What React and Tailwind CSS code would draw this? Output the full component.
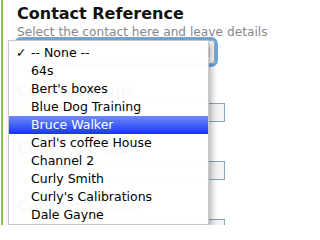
import { useState } from "react";

const contacts = [
  "-- None --",
  "64s",
  "Bert's boxes",
  "Blue Dog Training",
  "Bruce Walker",
  "Carl's coffee House",
  "Channel 2",
  "Curly Smith",
  "Curly's Calibrations",
  "Dale Gayne",
];

const fields = ["Contact Name", "Contact E-mail", "Contact Phone"];

const font = { fontFamily: '"DejaVu Sans", Verdana, sans-serif' };

const App = () => {
  const [selected] = useState(0);
  const [hovered] = useState(4);

  return (
    <div className="relative h-[225px] w-[273px] overflow-hidden bg-white pl-px" style={font}>
      <div className="h-full border-l-2 border-[#8cc63f] pl-[14px] pt-[4px]">
        <h2 className="whitespace-nowrap text-[16px] font-bold leading-[20px] text-[#111]">Contact Reference</h2>
        <p className="whitespace-nowrap text-[12.2px] leading-[16px] text-[#888]">Select the contact here and leave details</p>

        {/* select behind the menu */}
        <div className="flex h-[24px] w-[198px] items-center justify-end rounded-[4px] border border-[#9ab] pr-[4px] shadow-[0_0_0_3px_#6fa8dc]">
          <span className="h-[14px] w-[8px] rounded-sm bg-[#ccc]" />
        </div>

        {fields.map((field) => (
          <div key={field} className="mt-[17px]">
            <h3 className="whitespace-nowrap text-[15px] font-bold leading-[20px] text-[#111]">{field}</h3>
            <div className="mt-[2px] h-[19px] w-[208px] border border-[#8aa7b8] bg-[#f4f4f4]" />
          </div>
        ))}
      </div>

      {/* open dropdown */}
      <ul className="absolute left-[8px] top-[40px] w-[201px] border border-[#c8c8c8] bg-white/[0.975] pt-[3px] shadow-[3px_3px_6px_rgba(0,0,0,0.28)]">
        {contacts.map((contact, index) => (
          <li
            key={contact}
            className={`relative h-[18px] whitespace-nowrap pl-[22px] text-[12.5px] leading-[18px] ${
              index === hovered
                ? "bg-gradient-to-b from-[#7186fb] to-[#1b2ff6] text-white"
                : "text-black"
            }`}
          >
            {index === selected && <span className="absolute left-[7px] top-0">✓</span>}
            {contact}
          </li>
        ))}
      </ul>
    </div>
  );
};

export default App;
